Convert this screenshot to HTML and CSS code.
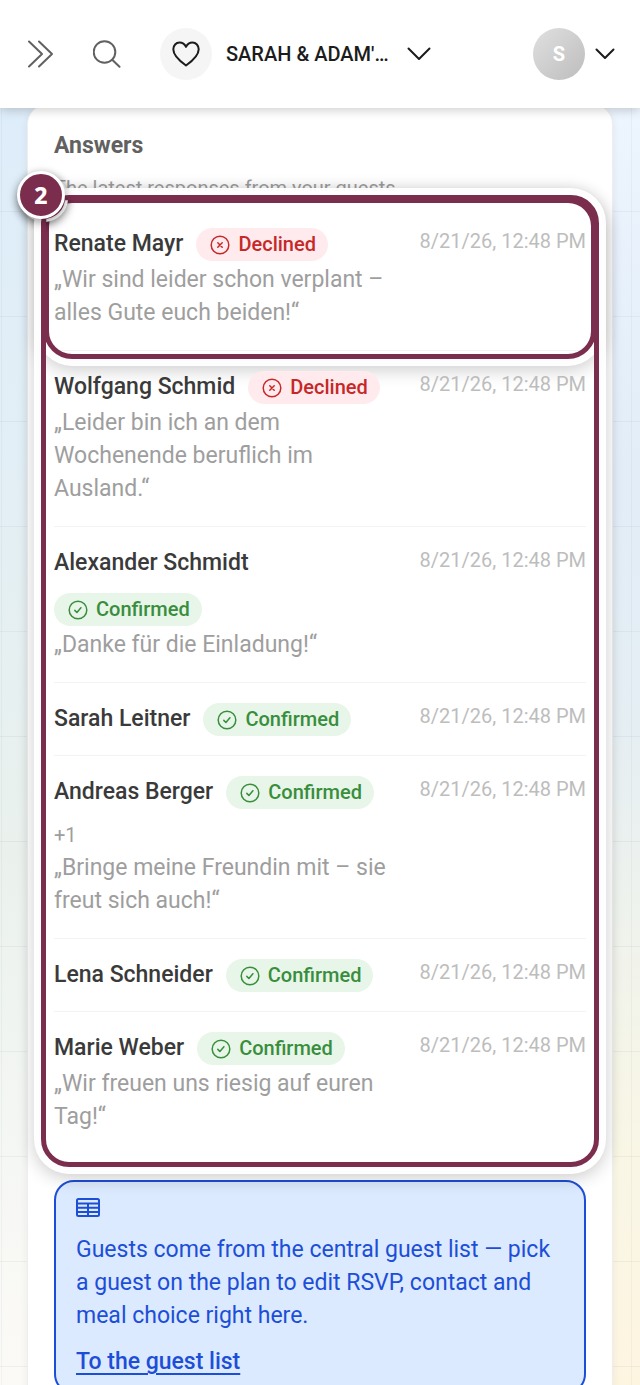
FILE: index.html
```html
<!DOCTYPE html>
<html lang="en">
<head>
  <meta charset="UTF-8" />
  <meta name="viewport" content="width=device-width, initial-scale=1.0" />
  <title>Guest answers</title>
  <link rel="stylesheet" href="styles.css">
</head>
<body>
  <!-- Shared icons -->
  <svg class="sprite" aria-hidden="true">
    <symbol id="icon-check" viewBox="0 0 20 20">
      <circle cx="10" cy="10" r="8.8" />
      <path d="M6.8 10.4l2.1 2.1 4-4.8" />
    </symbol>
    <symbol id="icon-cross" viewBox="0 0 20 20">
      <circle cx="10" cy="10" r="8.8" />
      <path d="M7.8 7.8l4.4 4.4M12.2 7.8l-4.4 4.4" />
    </symbol>
  </svg>

  <header class="topbar">
    <button class="icon-btn" type="button" aria-label="Open menu">
      <svg width="28" height="28" viewBox="0 0 28 28"><path d="M2 1.500l13 12.500-13 12.500M12 1.500l13 12.500-13 12.500" /></svg>
    </button>
    <button class="icon-btn search-btn" type="button" aria-label="Search">
      <svg width="28" height="28" viewBox="0 0 28 28"><circle cx="11.500" cy="12" r="10.800" /><path d="M19.200 19.800l7.300 7" /></svg>
    </button>
    <button class="event-btn" type="button">
      <span class="event-icon">
        <svg width="28" height="26" viewBox="0 0 28 26"><path d="M14 24.500C9 21 1.300 15 1.300 8.300 1.300 4.500 4 1.500 7.500 1.500c3 0 5.300 1.700 6.500 4.400 1.200-2.700 3.500-4.400 6.500-4.400 3.500 0 6.200 3 6.200 6.800C26.700 15 19 21 14 24.500z" /></svg>
      </span>
      <span class="event-name">SARAH &amp; ADAM'…</span>
      <svg width="24" height="14" viewBox="0 0 24 14"><path d="M1.500 1.500l10.500 10.500 10.500-10.500" /></svg>
    </button>
    <button class="user-btn" type="button" aria-label="Account">
      <span class="avatar">S</span>
      <svg width="20" height="12" viewBox="0 0 20 12"><path d="M1.500 1.500l8.500 8.500 8.500-8.500" /></svg>
    </button>
  </header>

  <main class="page">
    <section class="card">
      <h2>Answers</h2>
      <p class="subtitle">The latest responses from your guests</p>

      <div class="answers">
        <article class="answer">
          <div class="answer-body">
            <div class="answer-head">
              <h3>Renate Mayr</h3>
              <span class="status declined"><svg><use href="#icon-cross" /></svg>Declined</span>
            </div>
            <p class="quote">„Wir sind leider schon verplant – alles Gute euch beiden!“</p>
          </div>
          <time>8/21/26, 12:48 PM</time>
          <div class="marker marker-item"><span class="marker-badge"></span></div>
        </article>
        <article class="answer">
          <div class="answer-body">
            <div class="answer-head">
              <h3>Wolfgang Schmid</h3>
              <span class="status declined"><svg><use href="#icon-cross" /></svg>Declined</span>
            </div>
            <p class="quote">„Leider bin ich an dem Wochenende beruflich im Ausland.“</p>
          </div>
          <time>8/21/26, 12:48 PM</time>
        </article>
        <article class="answer">
          <div class="answer-body">
            <div class="answer-head">
              <h3>Alexander Schmidt</h3>
              <span class="status confirmed"><svg><use href="#icon-check" /></svg>Confirmed</span>
            </div>
            <p class="quote">„Danke für die Einladung!“</p>
          </div>
          <time>8/21/26, 12:48 PM</time>
        </article>
        <article class="answer">
          <div class="answer-body">
            <div class="answer-head">
              <h3>Sarah Leitner</h3>
              <span class="status confirmed"><svg><use href="#icon-check" /></svg>Confirmed</span>
            </div>
          </div>
          <time>8/21/26, 12:48 PM</time>
        </article>
        <article class="answer">
          <div class="answer-body">
            <div class="answer-head">
              <h3>Andreas Berger</h3>
              <span class="status confirmed"><svg><use href="#icon-check" /></svg>Confirmed</span>
              <span class="plus-one">+1</span>
            </div>
            <p class="quote">„Bringe meine Freundin mit – sie freut sich auch!“</p>
          </div>
          <time>8/21/26, 12:48 PM</time>
        </article>
        <article class="answer">
          <div class="answer-body">
            <div class="answer-head">
              <h3>Lena Schneider</h3>
              <span class="status confirmed"><svg><use href="#icon-check" /></svg>Confirmed</span>
            </div>
          </div>
          <time>8/21/26, 12:48 PM</time>
        </article>
        <article class="answer">
          <div class="answer-body">
            <div class="answer-head">
              <h3>Marie Weber</h3>
              <span class="status confirmed"><svg><use href="#icon-check" /></svg>Confirmed</span>
            </div>
            <p class="quote">„Wir freuen uns riesig auf euren Tag!“</p>
          </div>
          <time>8/21/26, 12:48 PM</time>
        </article>
        <div class="marker marker-list"><span class="marker-badge">2</span></div>
      </div>

      <aside class="info">
        <svg class="info-icon" width="24" height="20" viewBox="0 0 24 20"><rect x="1" y="1" width="22" height="17" rx="1.500" /><path d="M1 5.500h22M1 9.700h22M1 13.900h22M12 5.500v12.500" /></svg>
        <p>Guests come from the central guest list — pick a guest on the plan to edit RSVP, contact and meal choice right here.</p>
        <a href="#guests">To the guest list</a>
      </aside>
    </section>
  </main>
</body>
</html>
```
FILE: styles.css
```css
* {
  box-sizing: border-box;
}
body {
  margin: 0;
  height: 100vh;
  display: flex;
  flex-direction: column;
  overflow: hidden;
  font-family: Roboto, Arial, sans-serif;
  font-size: 23px;
  line-height: 33px;
  color: #9e9e9e;
}
h2, h3, p {
  margin: 0;
}
svg {
  flex: none;
  fill: none;
  stroke: currentColor;
  stroke-width: 2;
  stroke-linecap: round;
  stroke-linejoin: round;
}
.sprite {
  position: absolute;
  width: 0;
  height: 0;
}

/* Top bar */
.topbar {
  flex: none;
  display: flex;
  align-items: center;
  height: 108px;
  padding: 0 25px 0 27px;
  background: #fff;
  box-shadow: 0 2px 10px rgba(0,0,0,0.2);
  position: relative;
  z-index: 10;
}
.topbar button {
  display: flex;
  align-items: center;
  padding: 0;
  border: none;
  background: none;
  font: inherit;
  color: #1c1c1c;
  cursor: pointer;
}
.topbar .icon-btn {
  color: #616161;
}
.topbar .search-btn {
  margin-left: 38px;
}
.topbar .event-btn {
  margin-left: 39px;
}
.event-icon {
  display: flex;
  align-items: center;
  justify-content: center;
  width: 52px;
  height: 52px;
  border-radius: 50%;
  background: #f5f5f5;
}
.event-name {
  margin: 0 18px 0 14px;
  font-size: 20px;
  font-weight: 500;
}
.topbar .user-btn {
  margin-left: auto;
  gap: 10px;
}
.avatar {
  width: 52px;
  border-radius: 50%;
  background: linear-gradient(135deg, #e0e0e0, #bdbdbd);
  color: #fff;
  font-size: 20px;
  font-weight: 700;
  line-height: 52px;
  text-align: center;
}

/* Page background with a faint grid */
.page {
  flex: 1;
  min-height: 0;
  overflow: hidden;
  padding: 0 27px;
  background:
    linear-gradient(rgba(120,144,156,0.1) 1px, transparent 1px) 0 103px / 105px 105px,
    linear-gradient(90deg, rgba(120,144,156,0.08) 1px, transparent 1px) 1px 0 / 105px 105px,
    linear-gradient(#deedfa, #e3eff5 30%, #eaf1ed 58%, #f5f7f4 82%, #fcfaf7) left / 50% 100% no-repeat,
    linear-gradient(#edf5fe, #e2edf8 28%, #e5eef3 48%, #f0f3ec 65%, #f8f6e6 80%, #fef5e1) right / 50% 100% no-repeat;
}
.card {
  margin-top: -4px;
  padding: 24px 26px;
  border: 1px solid #eee;
  border-radius: 20px;
  background: #fff;
  box-shadow: 0 2px 8px rgba(0,0,0,0.06);
}
.card h2 {
  font-size: 23px;
  font-weight: 700;
  color: #616161;
}
.subtitle {
  margin: 10px 0 3px;
  font-size: 20px;
}

/* Answers */
.answers {
  position: relative;
}
.answer {
  position: relative;
  display: flex;
  align-items: flex-start;
  gap: 26px;
  padding: 20px 0 19px;
  border-bottom: 1px solid #f3f3f3;
}
.answer:nth-last-child(2) {
  border-bottom: none;
}
.answer-body {
  flex: 1;
}
.answer-head {
  display: flex;
  flex-wrap: wrap;
  align-items: center;
  gap: 13px;
}
.answer h3 {
  margin-bottom: 2px;
  font-size: 23px;
  font-weight: 500;
  line-height: 31px;
  color: #3a3a3a;
}
.status {
  display: flex;
  align-items: center;
  gap: 8px;
  height: 33px;
  padding: 0 12px 0 14px;
  border-radius: 17px;
  font-size: 20px;
  font-weight: 500;
}
.status svg {
  width: 20px;
  height: 20px;
  stroke-width: 1.500;
}
.declined {
  background: #ffebee;
  color: #c62828;
}
.confirmed {
  background: #e8f5e9;
  color: #388e3c;
}
.plus-one {
  font-size: 20px;
  line-height: 27px;
}
.quote {
  margin: 2px 0;
}
.answer time {
  font-size: 20px;
  line-height: 27px;
  color: #bdbdbd;
}

/* Numbered highlight frames */
.marker {
  position: absolute;
  border: 5px solid #7b2d4e;
  border-radius: 28px;
  box-shadow: 0 0 0 7px rgba(255,255,255,0.95), 0 4px 18px 7px rgba(0,0,0,0.2);
  pointer-events: none;
}
.marker-list {
  inset: -13px;
}
.marker-item {
  inset: -10px -10px -9px;
}
.marker-badge {
  position: absolute;
  top: -29px;
  left: -29px;
  width: 48px;
  height: 48px;
  border: 3px solid #fff;
  border-radius: 50%;
  background: #7b2d4e;
  box-shadow: 0 3px 10px rgba(0,0,0,0.4);
  color: #fff;
  font-family: "Noto Sans", sans-serif;
  font-weight: 800;
  line-height: 42px;
  text-align: center;
}

/* Info box */
.info {
  margin-top: 26px;
  padding: 16px 20px 14px;
  border: 2px solid #1d4ed8;
  border-radius: 20px;
  background: #dbeafe;
  color: #1d4ed8;
}
.info-icon {
  display: block;
}
.info p {
  margin: 15px 0 13px;
}
.info a {
  color: inherit;
  font-weight: 500;
  text-underline-offset: 4px;
}
```
